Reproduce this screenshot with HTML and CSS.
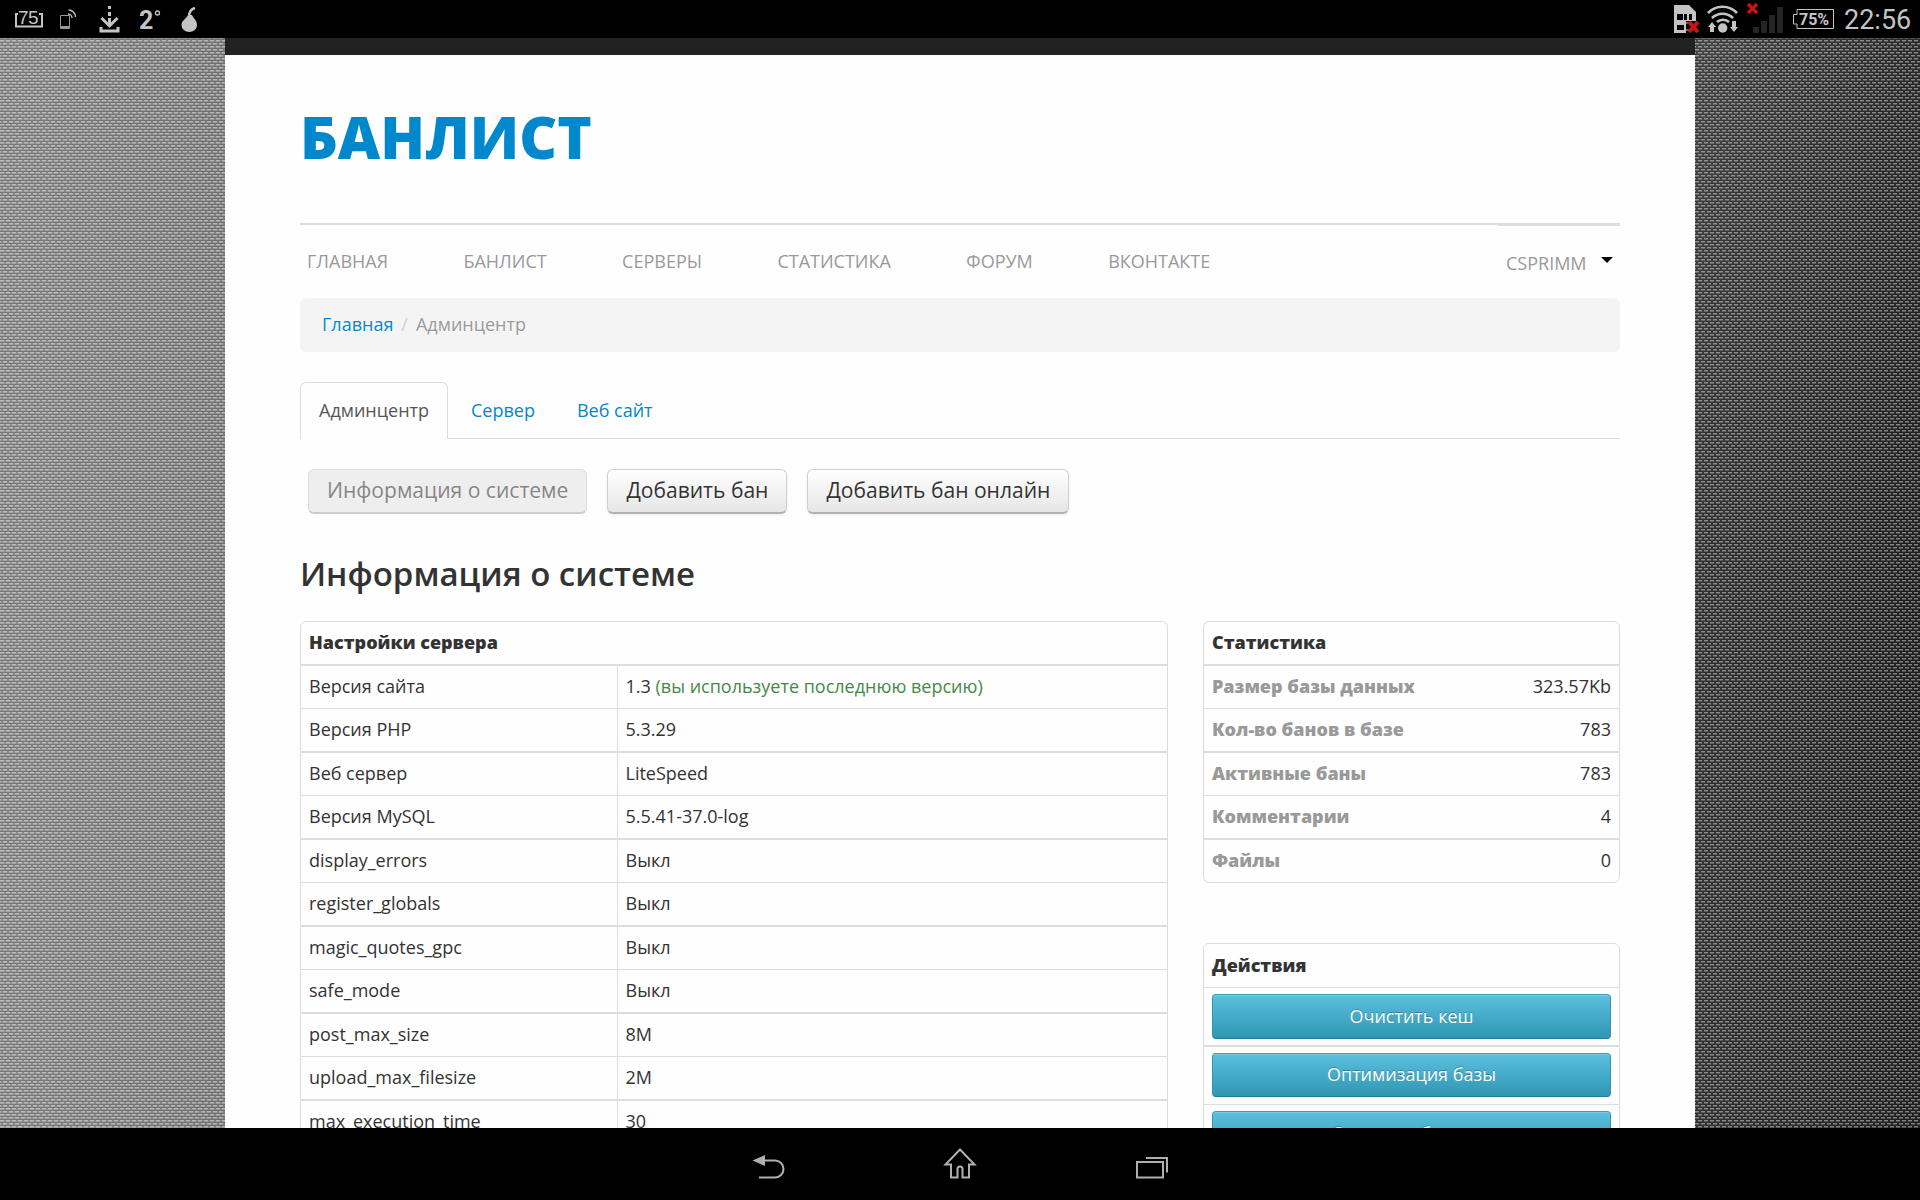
FILE: index.html
```html
<!DOCTYPE html>
<html lang="ru">
<head>
    <meta charset="UTF-8">
    <meta name="viewport" content="width=device-width, initial-scale=1.0">
    <title>Админцентр - Банлист</title>
    <link rel="stylesheet" href="styles.css">
</head>
<body>
    <div class="statusbar">
        <svg width="210" height="38" viewBox="0 0 210 38">
            <path d="M18 14h-2v12.500h26V14h-3" fill="none" stroke="#c4c4c4" stroke-width="2"/>
            <text x="18" y="23.500" class="sb-num">75</text>
            <path d="M60.5 15.500h9v13h-9z" fill="none" stroke="#999" stroke-width="1"/>
            <path d="M60 27h10" stroke="#999" stroke-width="2"/>
            <path d="M68 14a4 4 0 0 1 4 4M68.500 10a7 7 0 0 1 7 7" fill="none" stroke="#bbb" stroke-width="1.500"/>
            <path d="M109.500 6v3M109.500 12v4M109.500 18v7M101.500 18l8 8 8-8M101 27v4h17v-4" fill="none" stroke="#c4c4c4" stroke-width="3"/>
            <text x="139" y="29" class="sb-temp">2</text>
            <circle cx="157.500" cy="13" r="2" fill="none" stroke="#c4c4c4" stroke-width="1.300"/>
            <path d="M189 17c0-5 2-8 6-9" fill="none" stroke="#c4c4c4" stroke-width="2.500"/>
            <path d="M188 15h4c1 3 5 5 5 10a7.700 7 0 0 1-15.500 0c0-5 5-6 6.500-10z" fill="#c4c4c4"/>
        </svg>
        <svg width="250" height="38" viewBox="0 0 250 38">
            <path d="M4 5h15l7 7v21H4z" fill="#c4c4c4"/>
            <path d="M7 14h6v6H7zM14 14h3v6h-3zM19 14h3v6h-3zM7 25h7v5H7zM16 21h10v12H16z" fill="#000"/>
            <path d="M16 23h4M16 30h3" stroke="#c4c4c4"/>
            <path d="M19 22l9 10M28 22l-9 10" stroke="#c81414" stroke-width="4"/>
            <g fill="none" stroke="#c4c4c4" stroke-width="2.600">
                <path d="M38 13a20 20 0 0 1 29 0M42 18a15 15 0 0 1 21 0M47 22a9 9 0 0 1 12 0"/>
            </g>
            <circle cx="52.700" cy="28" r="4.700" fill="#c4c4c4"/>
            <path d="M42 22l4 5h-2v5h-4v-5h-2zM64 32l4-5h-2v-6h-4v6h-2z" fill="#c4c4c4"/>
            <path d="M78 4l9 9M87 4l-9 9" stroke="#c81414" stroke-width="3.500"/>
            <path d="M83 27h6v6h-6zM91 21h6v12h-6zM99 15h6v18h-6zM107 7h6v26h-6z" fill="#242424"/>
            <path d="M127 9.500h36.500v19H127v-4.500h-3.500v-9.500h3.500z" fill="none" stroke="#c4c4c4"/>
            <text x="129" y="24.500" class="sb-bat">75%</text>
            <text x="174" y="29" class="sb-clock">22:56</text>
        </svg>
    </div>

    <div class="viewport">
        <div class="page">
            <div class="topline"></div>
            <div class="content">
                <h1 class="logo">БАНЛИСТ</h1>

                <div class="nav">
                    <ul class="nav-links">
                        <li>ГЛАВНАЯ</li>
                        <li>БАНЛИСТ</li>
                        <li>СЕРВЕРЫ</li>
                        <li>СТАТИСТИКА</li>
                        <li>ФОРУМ</li>
                        <li>ВКОНТАКТЕ</li>
                    </ul>
                    <div class="nav-user">CSPRIMM <span class="caret"></span></div>
                </div>

                <div class="breadcrumb"><a>Главная</a><span class="divider">/</span><span>Админцентр</span></div>

                <ul class="tabs">
                    <li class="active">Админцентр</li>
                    <li>Сервер</li>
                    <li>Веб сайт</li>
                </ul>

                <div class="buttons">
                    <button class="btn disabled">Информация о системе</button>
                    <button class="btn">Добавить бан</button>
                    <button class="btn">Добавить бан онлайн</button>
                </div>

                <h2>Информация о системе</h2>

                <div class="columns">
                    <div class="box box-main">
                        <div class="row head">Настройки сервера</div>
                        <div class="row"><div>Версия сайта</div><div>1.3 <span class="green">(вы используете последнюю версию)</span></div></div>
                        <div class="row"><div>Версия PHP</div><div>5.3.29</div></div>
                        <div class="row"><div>Веб сервер</div><div>LiteSpeed</div></div>
                        <div class="row"><div>Версия MySQL</div><div>5.5.41-37.0-log</div></div>
                        <div class="row"><div>display_errors</div><div>Выкл</div></div>
                        <div class="row"><div>register_globals</div><div>Выкл</div></div>
                        <div class="row"><div>magic_quotes_gpc</div><div>Выкл</div></div>
                        <div class="row"><div>safe_mode</div><div>Выкл</div></div>
                        <div class="row"><div>post_max_size</div><div>8M</div></div>
                        <div class="row"><div>upload_max_filesize</div><div>2M</div></div>
                        <div class="row"><div>max_execution_time</div><div>30</div></div>
                    </div>
                    <div class="side">
                        <div class="box box-stat">
                            <div class="row head">Статистика</div>
                            <div class="row"><b>Размер базы данных</b><div>323.57Kb</div></div>
                            <div class="row"><b>Кол-во банов в базе</b><div>783</div></div>
                            <div class="row"><b>Активные баны</b><div>783</div></div>
                            <div class="row"><b>Комментарии</b><div>4</div></div>
                            <div class="row"><b>Файлы</b><div>0</div></div>
                        </div>
                        <div class="box box-act">
                            <div class="row head">Действия</div>
                            <div class="act"><button class="btn-info">Очистить кеш</button></div>
                            <div class="act"><button class="btn-info">Оптимизация базы</button></div>
                            <div class="act"><button class="btn-info">Очистить банлист</button></div>
                        </div>
                    </div>
                </div>
            </div>
        </div>
    </div>

    <div class="navbar">
        <svg width="420" height="72" viewBox="0 0 420 72">
            <g fill="none" stroke="#b0b0b0" stroke-width="2">
                <path d="M12 32.500h13a8.500 8.500 0 0 1 0 17H9"/>
                <path d="M210 21.500L195.500 36.500h5.500v13h6.500V41a2.500 2.500 0 0 1 5 0v8.500h6.500v-13h5.500z"/>
                <path d="M387 34h26v15.500h-26zM396 30h21v14.500"/>
            </g>
            <path d="M2.500 32.500L15 27v11z" fill="#b0b0b0"/>
        </svg>
    </div>
</body>
</html>
```
FILE: styles.css
```css
* {
    box-sizing: border-box;
}
body {
    margin: 0;
    height: 1200px;
    display: flex;
    flex-direction: column;
    overflow: hidden;
    background: #000;
    color: #333;
    font-family: "Open Sans", "Noto Sans", sans-serif;
    font-size: 18px;
    line-height: 27px;
}
ul {
    list-style: none;
    margin: 0;
    padding: 0;
}
/* android bars */
.statusbar {
    height: 38px;
    flex: none;
    display: flex;
    justify-content: space-between;
    background: #000;
}
.statusbar text {
    fill: #c4c4c4;
    font-family: Roboto, sans-serif;
}
.statusbar .sb-num {
    font-size: 19px;
    font-family: "Liberation Sans", sans-serif;
    letter-spacing: -.5px;
}
.statusbar .sb-temp {
    font-size: 25px;
    font-weight: bold;
}
.statusbar .sb-bat {
    font-size: 16px;
    font-weight: bold;
}
.sb-clock {
    font-size: 27px;
}
.navbar {
    height: 72px;
    flex: none;
    display: flex;
    justify-content: center;
    background: #000;
}
/* woven background */
.viewport {
    height: 1090px;
    flex: none;
    overflow: hidden;
    padding: 0 225px;
    background:
        conic-gradient(from 270deg at 4px 1px, rgba(255,255,255,.42) 90deg, transparent 0) 0 2px / 6px 6px,
        conic-gradient(from 270deg at 4px 1px, rgba(255,255,255,.42) 90deg, transparent 0) 3px 5px / 6px 6px,
        conic-gradient(from 270deg at 4px 1px, rgba(255,255,255,.2) 90deg, transparent 0) 0 3px / 6px 6px,
        conic-gradient(from 270deg at 4px 1px, rgba(255,255,255,.2) 90deg, transparent 0) 3px 0 / 6px 6px,
        linear-gradient(transparent 2px, rgba(0,0,0,.14) 0) 0 2px / 6px 3px,
        linear-gradient(rgba(0,0,0,0), rgba(0,0,0,.25) 50%, rgba(0,0,0,.25)) right / 225px 100% no-repeat,
        linear-gradient(90deg, #8c8c8c 0, #808080 225px, #484848 1695px, #2e2e2e 1920px);
}
.page {
    height: 1090px;
    background: #fefefe;
}
.topline {
    height: 17px;
    background: #222;
}
.content {
    padding: 0 75px;
}
.logo {
    margin: 0;
    height: 168px;
    padding-top: 41px;
    color: #0088cc;
    font-size: 58.5px;
    font-weight: 800;
    line-height: 80px;
}
.nav {
    display: flex;
    justify-content: space-between;
    height: 75px;
    border-top: 2px solid #ddd;
    color: #999;
}
.nav-links {
    display: flex;
    gap: 75.4px;
    padding: 23px 0 0 7px;
}
.nav-user {
    width: 122px;
    padding: 24px 7px 0 8px;
    border-top: 1px solid #ddd;
    display: flex;
    justify-content: space-between;
}
.caret {
    margin-top: 7px;
    height: 0;
    border: 6px solid transparent;
    border-top-color: #000;
    border-bottom: 0;
}
.breadcrumb {
    height: 54px;
    padding: 13px 22px;
    border-radius: 6px;
    background: #f4f4f4;
    color: #999;
    text-shadow: 0 1px 0 #fff;
}
.breadcrumb a {
    color: #0088cc;
}
.breadcrumb .divider {
    padding: 0 8px;
    color: #ccc;
}
.tabs {
    display: flex;
    height: 57px;
    margin-top: 30px;
    box-shadow: inset 0 -1px #ddd;
    color: #0088cc;
}
.tabs li {
    padding: 14px 18px 0 18px;
    margin-right: 4px;
    border: 1px solid transparent;
}
.tabs .active {
    color: #555;
    background: #fefefe;
    border: 1px solid #ddd;
    border-bottom: 0;
    border-radius: 6px 6px 0 0;
}
.buttons {
    display: flex;
    gap: 20px;
    margin: 30px 0 0 8px;
}
.btn {
    height: 45px;
    padding: 0 18px 3px;
    border: 1px solid #d0d0d0;
    border-bottom: 2px solid #b3b3b3;
    border-radius: 6px;
    background: linear-gradient(#fff, #e6e6e6);
    box-shadow: 0 1px 3px rgba(0,0,0,.08);
    color: #333;
    font-family: inherit;
    font-size: 21.05px;
    text-shadow: 0 1px 1px rgba(255,255,255,.75);
}
.btn.disabled {
    background: #eee;
    border-color: #ddd;
    border-bottom-color: #ccc;
    box-shadow: none;
    color: #858585;
}
h2 {
    margin: 36px 0 0;
    font-size: 33px;
    font-weight: 600;
    line-height: 48px;
}
.columns {
    display: flex;
    justify-content: space-between;
    margin-top: 23px;
}
.box {
    border: 1px solid #ddd;
    border-radius: 6px;
}
.box-main {
    width: 868px;
}
.side {
    width: 417px;
}
.row {
    display: flex;
    height: 43px;
    line-height: 40px;
    border-bottom: 1px solid #ddd;
}
.row:nth-child(odd) {
    height: 44px;
    border-bottom-width: 2px;
}
.row > * {
    padding: 0 8px;
}
.row.head {
    padding: 0 8px;
    font-weight: 800;
}
.box-main .row > div:first-child {
    width: 317px;
    border-right: 1px solid #ddd;
}
.box-main .row > div:last-child {
    padding-left: 7.5px;
}
.box-stat .row {
    justify-content: space-between;
}
.box-stat .row b {
    color: #999;
    font-weight: 800;
}
.box-stat .row:last-child {
    height: 42px;
    border-bottom: 0;
}
.green {
    color: #468847;
}
.box-act {
    margin-top: 60px;
}
.box-act .row.head {
    height: 44px;
    line-height: 42px;
    border-bottom-width: 1px;
}
.act {
    height: 58px;
    padding: 6px 8px;
    border-bottom: 1px solid #ddd;
}
.act:nth-child(2) {
    height: 59px;
    border-bottom-width: 2px;
}
.btn-info {
    display: block;
    width: 100%;
    height: 45px;
    padding: 0 0 2px;
    border: 1px solid #2f96b4;
    border-top-color: #3b9ab8;
    border-bottom-color: #1f7f9b;
    border-radius: 4px;
    background: linear-gradient(#5bc0de, #2f96b4);
    box-shadow: inset 0 1px 0 rgba(255,255,255,.2);
    color: #fff;
    font-family: inherit;
    font-size: 18px;
    text-shadow: 0 -1px 0 rgba(0,0,0,.25);
}
.act:nth-child(3) .btn-info {
    height: 44px;
}
```
